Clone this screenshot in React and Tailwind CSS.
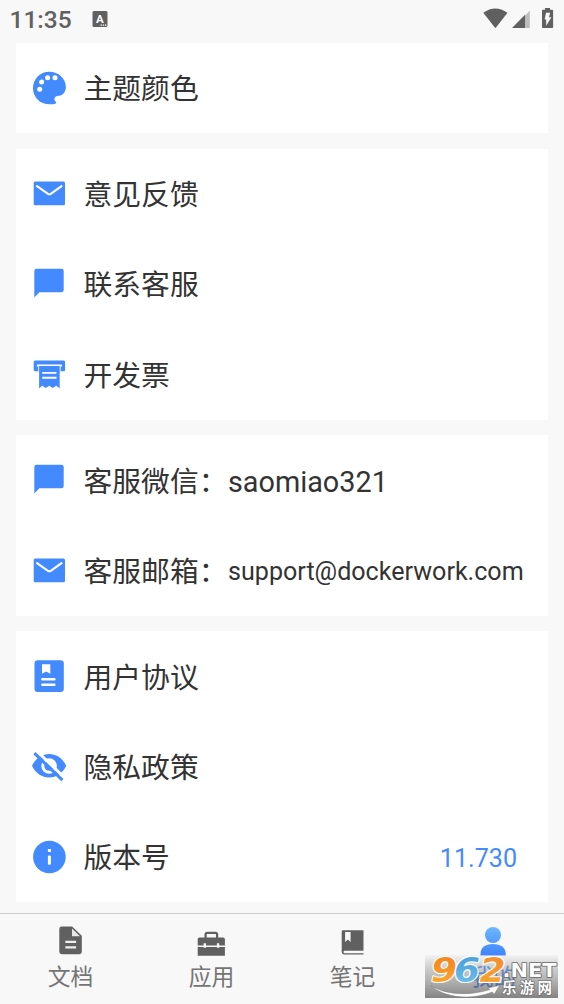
import React from "react";

const BLUE = "#448aff";

function Icon({ children }) {
  return (
    <svg className="h-9 w-9 shrink-0" viewBox="0 0 36 36" fill={BLUE}>
      {children}
    </svg>
  );
}

const PaletteIcon = () => (
  <Icon>
    <path d="M18.3 1.7C9 1.7 2 9 2 18.2c0 9 7.200 16.100 16.500 16.100 2.600 0 4.900-.2 6.100-.9.900-.6.500-1.200-.1-1.900-1.800-2.200-1.300-5 2.100-5.600 1.200-.2 2.300-.1 3.500-.7 2.900-1.300 4.800-4.700 4.800-8C34.800 8.400 27.600 1.700 18.300 1.700z" />
    <g fill="#fff">
      <circle cx="8.700" cy="19.300" r="2.500" />
      <circle cx="10.600" cy="12" r="2.500" />
      <circle cx="16.600" cy="7.700" r="2.500" />
      <circle cx="24" cy="7.700" r="2.500" />
    </g>
  </Icon>
);

const MailIcon = () => (
  <Icon>
    <rect x="2.700" y="5.500" width="31.300" height="23.700" rx="1.500" />
    <path d="M5.300 9.600 17 17.900q1.400.8 2.800 0L31.200 9.600" fill="none" stroke="#fff" strokeWidth="2.100" />
  </Icon>
);

const ChatIcon = () => (
  <Icon>
    <path d="M5.500 2.700h25a2.200 2.200 0 0 1 2.200 2.200v19.200a2.200 2.200 0 0 1-2.200 2.200H8.400l-5.100 5.300V4.900a2.200 2.200 0 0 1 2.200-2.200z" />
  </Icon>
);

const InvoiceIcon = () => (
  <Icon>
    <path d="M4.200 3.500h28.400a1.500 1.500 0 0 1 1.500 1.500v7.800a1.500 1.500 0 0 1-1.500 1.500H4.200a1.500 1.500 0 0 1-1.500-1.500V5a1.500 1.500 0 0 1 1.500-1.500z" />
    <path d="M5.900 7.600h25v1.900h-1.300v5H7.300v-5H5.900z" fill="#fff" />
    <path d="M8.100 8.900h20.600v22.300l-3.500-2.500-3.500 2.400-3.500-2.400-3.500 2.400-3.400-2.400-3.200 2.500z" />
    <path d="M11.200 15.900h14.300M11.200 20.700h14.300" stroke="#fff" strokeWidth="1.900" />
  </Icon>
);

const AgreementIcon = () => (
  <Icon>
    <rect x="3.500" y="2.300" width="29.300" height="31.800" rx="3.300" />
    <path d="M11 6.200h8.300v9.600l-4.200-2.200-4.100 2.200z" fill="#fff" />
    <path d="M11.300 21.300h12.100M11.300 26.700h12.100" stroke="#fff" strokeWidth="2.400" strokeLinecap="round" />
  </Icon>
);

const HiddenIcon = () => (
  <Icon>
    <path d="M1 16.800C4.500 9.100 11 5 18.200 5s13.500 4.100 17 11.800c-3.500 7.600-9.800 11.700-17 11.700S4.500 24.400 1 16.800z" />
    <circle cx="18.100" cy="17" r="6.300" fill={BLUE} stroke="#fff" strokeWidth="3" />
    <path d="M18 12.600c2.700 0 4.500 1.900 4.500 4.500" fill="none" stroke="#fff" strokeWidth="2" />
    <path d="M5.300 1.700 34.600 29.700" stroke="#fff" strokeWidth="3" />
    <path d="m3.400 4.200 28 27" stroke={BLUE} strokeWidth="3" />
  </Icon>
);

const InfoIcon = () => (
  <Icon>
    <circle cx="18.400" cy="18" r="16.300" />
    <rect x="16.900" y="9.900" width="3" height="3" rx=".4" fill="#fff" />
    <rect x="16.900" y="16.500" width="3" height="9.300" rx="1" fill="#fff" />
  </Icon>
);

function Card({ children }) {
  return <section className="flex flex-col bg-white">{children}</section>;
}

function Row({ icon, label, detail, value }) {
  return (
    <div className="flex h-[90.3px] items-center pr-[31px] pl-[15px]">
      {icon}
      <span className="ml-[16.5px] pt-[2.500px] pr-[0.500px] text-[28.8px] leading-[42px] whitespace-nowrap">{label}</span>
      {detail}
      {value && <span className="ml-auto pt-1 text-[25.1px] leading-8 text-[#448aff]">{value}</span>}
    </div>
  );
}

function Tab({ icon, label, active }) {
  return (
    <div className="flex flex-1 flex-col items-center pt-1.5">
      <svg className="h-10 w-10 shrink-0" viewBox="0.700 0 40 40" fill="#606060">
        {icon}
      </svg>
      <span className={`text-[22.8px] leading-[36px] ${active ? "text-[#2672f5]" : "text-[#757575]"}`}>{label}</span>
    </div>
  );
}

const docTab = (
  <>
    <path d="M11.400 6.600h10.400L31.500 15.800v16a2.400 2.400 0 0 1-2.400 2.400H11.400A2.400 2.400 0 0 1 9 31.800V9a2.400 2.400 0 0 1 2.400-2.400z" />
    <path d="M21.700 8.500v7.700h8z" fill="#e8e8e8" />
    <path d="M15 21.900h10.800M15 27.300h10.800" stroke="#eee" strokeWidth="2.200" />
  </>
);

const toolboxTab = (
  <>
    <path d="M14.300 18v-3.600a1.600 1.600 0 0 1 1.600-1.600h8.300a1.600 1.600 0 0 1 1.600 1.600V18" fill="none" stroke="#606060" strokeWidth="2.200" />
    <path d="M8.200 17.400h23.600a1.800 1.800 0 0 1 1.800 1.800v6.200H6.400v-6.200a1.800 1.800 0 0 1 1.800-1.800zM6.400 27h27.200v8.700H6.400z" />
    <path d="M12.300 23.200h2.400v4.600h-2.400zM25.600 23.200H28v4.600h-2.400z" fill="#f8f8f8" />
  </>
);

const noteTab = (
  <>
    <path d="M10.500 10.300h20.700v20.500H12.400a1 1 0 0 0 0 2.400h18.800v1.200H11.800A2.400 2.400 0 0 1 9.400 32V11.400a1.100 1.100 0 0 1 1.100-1.100z" />
    <path d="M12.800 12h5.500v9.900l-2.700-2.300-2.800 2.300z" fill="#f8f8f8" />
  </>
);

const meTab = (
  <>
    <defs>
      <linearGradient id="person" gradientUnits="userSpaceOnUse" x1="0" y1="7" x2="0" y2="36">
        <stop offset="0" stopColor="#6db8fd" />
        <stop offset="1" stopColor="#3e82ff" />
      </linearGradient>
    </defs>
    <circle cx="20.500" cy="15" r="8" fill="url(#person)" transform="translate(-.8 0)" />
    <path d="M7.200 36v-2c0-6.400 4.700-9.900 12.500-9.900S32.400 27.600 32.400 34v2z" fill="url(#person)" />
  </>
);

function Watermark() {
  return (
    <svg className="absolute top-[955px] left-[425px] h-[43px] w-[133px] overflow-visible" viewBox="0 0 133 43">
      <defs>
        <linearGradient id="shade" x1="0" y1="0" x2="0" y2="1">
          <stop offset="0" stopColor="#f0f0f0" stopOpacity=".6" />
          <stop offset=".4" stopColor="#909090" stopOpacity=".5" />
          <stop offset="1" stopColor="#505050" stopOpacity=".7" />
        </linearGradient>
        <linearGradient id="orange" x1="0" y1="0" x2="0" y2="1">
          <stop offset=".3" stopColor="#f58a22" />
          <stop offset="1" stopColor="#ffb02e" />
        </linearGradient>
        <linearGradient id="sky" x1="0" y1="0" x2="0" y2="1">
          <stop offset=".3" stopColor="#4fa6dc" />
          <stop offset="1" stopColor="#78c5ee" />
        </linearGradient>
      </defs>
      <rect width="133" height="43" fill="url(#shade)" />
      <path d="M6 30.500C20 40 45 41 65 34.500L62.500 33l12-2.500-5.500 9-1.500-2.500C46 45.500 19 43 6 30.500z" fill="#fff" stroke="#777" strokeWidth=".5" />
      <g fontFamily="DejaVu Sans, sans-serif" fontWeight="700" stroke="#fff" paintOrder="stroke" strokeLinejoin="round">
        <g fontSize="33" fontStyle="italic" strokeWidth="2.200">
          <text x="6" y="27" textLength="26" lengthAdjust="spacingAndGlyphs" fill="url(#orange)">9</text>
          <text x="29" y="27" textLength="26" lengthAdjust="spacingAndGlyphs" fill="url(#sky)">6</text>
          <text x="54.500" y="27" textLength="26" lengthAdjust="spacingAndGlyphs" fill="url(#orange)" fillOpacity=".92">2</text>
        </g>
        <text x="77.500" y="22" fontSize="19.500" textLength="54" lengthAdjust="spacingAndGlyphs" fill="#fff" stroke="#666" strokeWidth="1.600">.NET</text>
      </g>
      <text x="77" y="38" fontSize="14.500" textLength="50" fontFamily="Noto Sans CJK SC, sans-serif" fontWeight="700" fill="#fff" stroke="#666" strokeWidth="1.200" paintOrder="stroke">乐游网</text>
    </svg>
  );
}

function StatusBar() {
  return (
    <header className="flex h-[43px] shrink-0 items-start text-[#606060]">
      <span className="mt-[6px] ml-[9.5px] w-[82.5px] text-[24.5px] leading-7 font-medium">11:35</span>
      <svg className="mt-[11px] h-4 w-[16px]" viewBox="-.5 0 16 16">
        <rect width="15" height="16" rx="1.500" fill="#606060" />
        <text x="7.300" y="11.700" textAnchor="middle" fontSize="11.500" fontWeight="700" fontFamily="Roboto, sans-serif" fill="#fff">A</text>
        <path d="M8 14.200h1.400M10.300 14.200h1.400M12.500 14.200h1.400" stroke="#fff" strokeWidth="1.300" />
      </svg>
      <svg className="mt-[7px] ml-auto h-[22px] w-[72px]" viewBox="482 7 72 22" fill="#606060">
        <path d="M483.300 13.100q11.900-8.500 24.200 0L496 28q-.6.600-1.200 0z" transform="translate(0 -.4)" />
        <path d="M529.800 10.800V28H525V15.600z" fill="#bdbdbd" />
        <path d="M525 14.800V28h-13z" />
        <path d="M545 8h5v1.800h2.300q.8 0 .8.800v16.600q0 .8-.8.800h-9.500q-.8 0-.8-.8V10.600q0-.8.800-.8h2.200z" />
        <path d="M546 12.800h4.200l-1.300 4.400h2.500l-5.200 8.600v-6.400h-1.500z" fill="#f8f8f8" />
      </svg>
      <div className="w-2.5" />
    </header>
  );
}

export default function App() {
  return (
    <div className="relative flex h-[1004px] w-[564px] flex-col overflow-hidden bg-[#f8f8f8] font-['Roboto','Noto_Sans_CJK_SC',sans-serif] text-[#333]">
      <StatusBar />
      <main className="flex flex-col gap-[15.5px] px-4">
        <Card>
          <Row icon={<PaletteIcon />} label="主题颜色" />
        </Card>
        <Card>
          <Row icon={<MailIcon />} label="意见反馈" />
          <Row icon={<ChatIcon />} label="联系客服" />
          <Row icon={<InvoiceIcon />} label="开发票" />
        </Card>
        <Card>
          <Row icon={<ChatIcon />} label="客服微信：" detail={<span className="pt-1 text-[28.8px] leading-9">saomiao321</span>} />
          <Row icon={<MailIcon />} label="客服邮箱：" detail={<span className="pt-[3px] text-[25.1px] leading-9">support@dockerwork.com</span>} />
        </Card>
        <Card>
          <Row icon={<AgreementIcon />} label="用户协议" />
          <Row icon={<HiddenIcon />} label="隐私政策" />
          <Row icon={<InfoIcon />} label="版本号" value="11.730" />
        </Card>
      </main>
      <nav className="mt-auto flex h-[91px] shrink-0 border-t border-[#ccc]">
        <Tab icon={docTab} label="文档" />
        <Tab icon={toolboxTab} label="应用" />
        <Tab icon={noteTab} label="笔记" />
        <Tab icon={meTab} label="我的" active />
      </nav>
      <Watermark />
    </div>
  );
}
